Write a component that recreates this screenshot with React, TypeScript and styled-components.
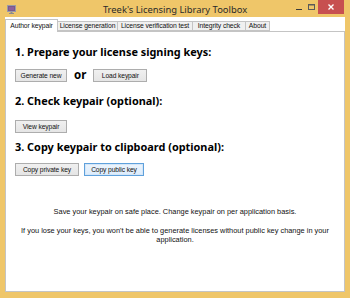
import React from "react";
import styled, { createGlobalStyle } from "styled-components";

const Global = createGlobalStyle`
  html, body { margin: 0; padding: 0; background: #efc669; }
  * { box-sizing: border-box; }
`;

const Window = styled.div`
  width: 350px;
  height: 298px;
  background: #efc669;
  display: flex;
  flex-direction: column;
  padding: 0 5px 6px 5px;
  font-family: "Liberation Sans", Arial, sans-serif;
  color: #000;
`;

const TitleBar = styled.div`
  height: 17px;
  display: grid;
  grid-template-columns: 1fr auto 1fr;
  align-items: center;
  margin: 0 -5px;
`;

const IconBox = styled.div`
  padding-left: 7px;
  display: flex;
  align-items: center;
  height: 17px;
`;

const Title = styled.div`
  font-family: "Noto Sans", "Open Sans", sans-serif;
  font-size: 9.4px;
  color: #2a2a2a;
  line-height: 17px;
  padding-top: 1px;
`;

const Controls = styled.div`
  justify-self: end;
  align-self: start;
  display: flex;
  padding-right: 6px;
`;

const CapButton = styled.div<{ $w: number }>`
  width: ${(p) => p.$w}px;
  height: 14px;
  display: flex;
  align-items: center;
  justify-content: center;
`;

const CloseButton = styled(CapButton)`
  background: #c75050;
`;

const Client = styled.div`
  flex: 1;
  display: flex;
  flex-direction: column;
  background: #ffffff;
`;

const TabStrip = styled.div`
  height: 14px;
  display: flex;
  align-items: flex-end;
`;

const Tab = styled.div<{ $w: number; $active?: boolean }>`
  position: relative;
  z-index: ${(p) => (p.$active ? 2 : 1)};
  width: ${(p) => p.$w}px;
  height: ${(p) => (p.$active ? 13 : 10)}px;
  margin-bottom: ${(p) => (p.$active ? -1 : 0)}px;
  margin-right: -1px;
  background: ${(p) => (p.$active ? "#ffffff" : "#f0f0f0")};
  border: 1px solid #c4c4c4;
  border-bottom: ${(p) => (p.$active ? "none" : "1px solid #c4c4c4")};
  font-size: 6.8px;
  letter-spacing: -0.1px;
  line-height: ${(p) => (p.$active ? 11 : 8)}px;
  text-align: center;
  white-space: nowrap;
  color: #111;
`;

const Panel = styled.div`
  flex: 1;
  border: 1px solid #c4c4c4;
  background: #ffffff;
  padding: 0 0 0 9px;
  display: flex;
  flex-direction: column;
`;

const Heading = styled.div<{ $top: number }>`
  margin-top: ${(p) => p.$top}px;
  font-family: "Noto Sans", "Open Sans", sans-serif;
  font-weight: 700;
  font-size: 10.9px;
  line-height: 14px;
  height: 14px;
  white-space: nowrap;
  color: #000;
`;

const ButtonRow = styled.div<{ $top: number }>`
  margin-top: ${(p) => p.$top}px;
  display: flex;
  align-items: center;
  height: 13px;
`;

const Button = styled.div<{ $w: number; $focused?: boolean }>`
  width: ${(p) => p.$w}px;
  height: 13px;
  margin-right: ${(p) => (p.$focused ? 0 : 5)}px;
  border: 1px solid ${(p) => (p.$focused ? "#5fa1dc" : "#adadad")};
  background: ${(p) =>
    p.$focused
      ? "linear-gradient(#ecf4fc, #dcecfc)"
      : "linear-gradient(#f0f0f0, #e5e5e5)"};
  box-shadow: ${(p) => (p.$focused ? "inset 0 0 0 1px #d4e6f8" : "none")};
  font-size: 6.7px;
  letter-spacing: -0.1px;
  line-height: 11px;
  text-align: center;
  white-space: nowrap;
  color: #111;
`;

const Or = styled.span`
  font-family: "Noto Sans", "Open Sans", sans-serif;
  font-weight: 700;
  font-size: 11.5px;
  line-height: 13px;
  margin: -2px 7px 0 2px;
`;

const Note = styled.p<{ $top: number }>`
  margin: ${(p) => p.$top}px 0 0 -9px;
  padding: 0 10px;
  font-size: 7.4px;
  line-height: 9px;
  text-align: center;
  color: #111;
`;

const AppIcon = () => (
  <svg width="9" height="9" viewBox="0 0 9 9">
    <rect x="0.5" y="0.5" width="8" height="6" fill="#7a5a8a" stroke="#9a9aa8" strokeWidth="1" />
    <rect x="2" y="2" width="5" height="3" fill="#8e5f9c" />
    <rect x="3.5" y="7" width="2" height="1" fill="#8a8a90" />
    <rect x="2" y="8" width="5" height="1" fill="#8a8a90" />
  </svg>
);

export default function App() {
  return (
    <>
      <Global />
      <Window>
        <TitleBar>
          <IconBox>
            <AppIcon />
          </IconBox>
          <Title>Treek's Licensing Library Toolbox</Title>
          <Controls>
            <CapButton $w={13}>
              <svg width="6" height="9" viewBox="0 0 6 9">
                <rect x="0" y="6" width="6" height="1" fill="#3a3a3a" />
              </svg>
            </CapButton>
            <CapButton $w={13}>
              <svg width="7" height="7" viewBox="0 0 7 7">
                <rect x="0.5" y="0.5" width="6" height="5" fill="none" stroke="#5a5a5a" strokeWidth="1" />
                <rect x="0.5" y="0.5" width="6" height="1" fill="#5a5a5a" />
              </svg>
            </CapButton>
            <CloseButton $w={26}>
              <svg width="6" height="6" viewBox="0 0 6 6">
                <path d="M0.5 0.5 L5.5 5.5 M5.5 0.5 L0.5 5.5" stroke="#ffffff" strokeWidth="1.4" />
              </svg>
            </CloseButton>
          </Controls>
        </TitleBar>
        <Client>
          <TabStrip>
            <Tab $w={53} $active>Author keypair</Tab>
            <Tab $w={61}>License generation</Tab>
            <Tab $w={76}>License verification test</Tab>
            <Tab $w={54}>Integrity check</Tab>
            <Tab $w={25}>About</Tab>
          </TabStrip>
          <Panel>
            <Heading $top={13}>1. Prepare your license signing keys:</Heading>
            <ButtonRow $top={10}>
              <Button $w={52}>Generate new</Button>
              <Or>or</Or>
              <Button $w={54}>Load keypair</Button>
            </ButtonRow>
            <Heading $top={12}>2. Check keypair (optional):</Heading>
            <ButtonRow $top={12}>
              <Button $w={52}>View keypair</Button>
            </ButtonRow>
            <Heading $top={7}>3. Copy keypair to clipboard (optional):</Heading>
            <ButtonRow $top={9}>
              <Button $w={64}>Copy private key</Button>
              <Button $w={60} $focused>Copy public key</Button>
            </ButtonRow>
            <Note $top={31}>Save your keypair on safe place. Change keypair on per application basis.</Note>
            <Note $top={10}>
              If you lose your keys, you won't be able to generate licenses without public key change in your
              application.
            </Note>
          </Panel>
        </Client>
      </Window>
    </>
  );
}
